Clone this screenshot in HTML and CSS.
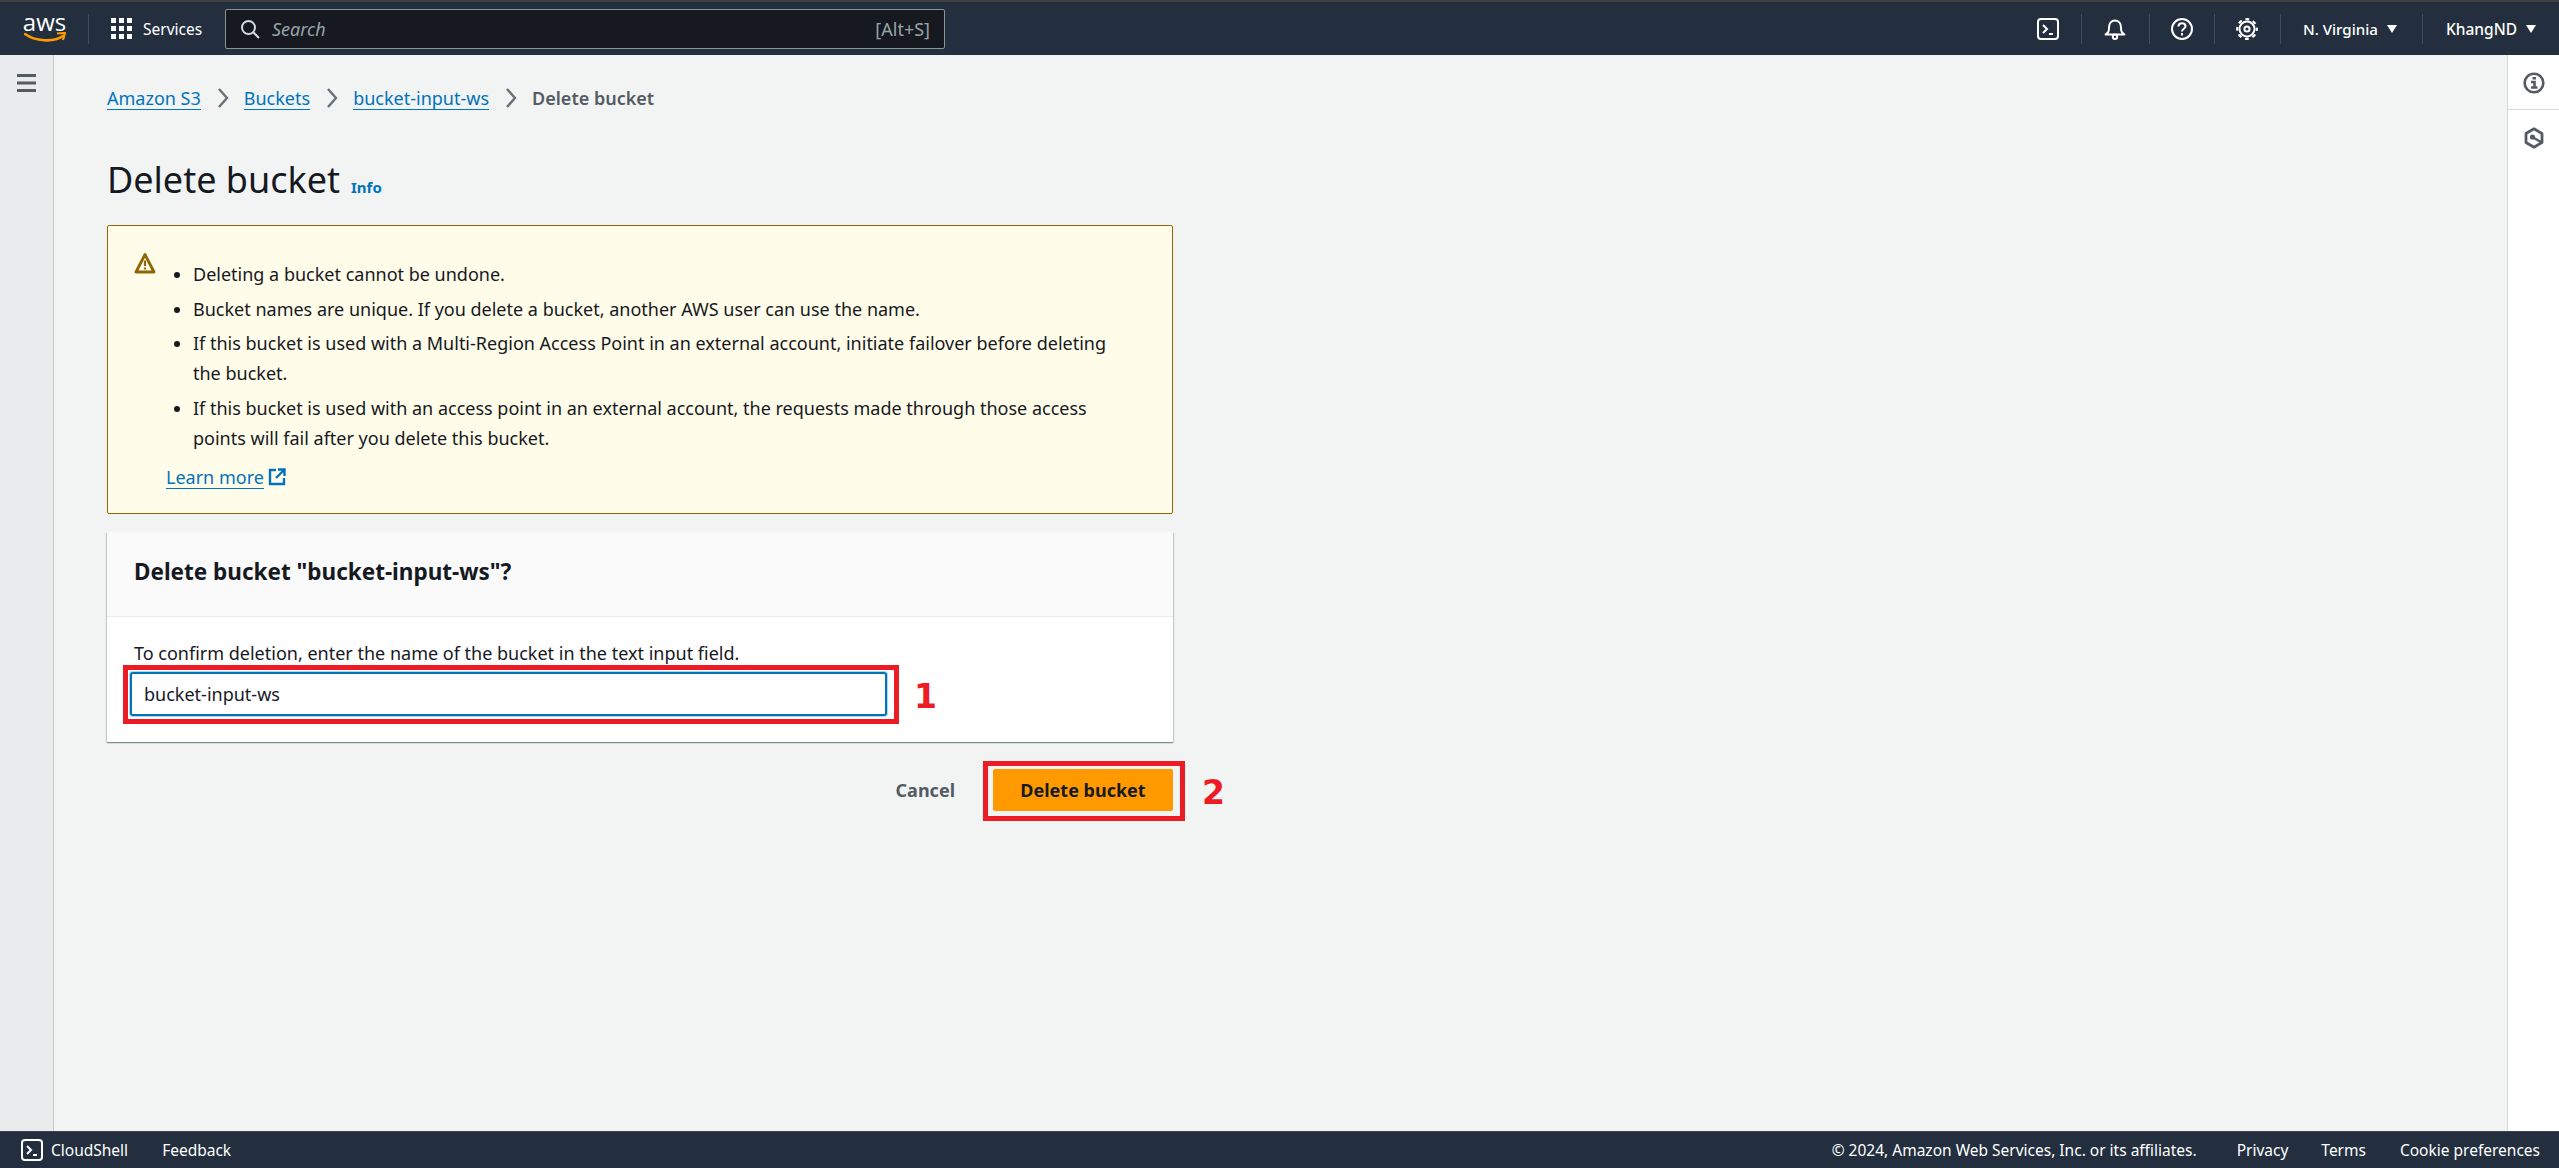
FILE: index.html
```html
<!DOCTYPE html>
<html lang="en">
<head>
<meta charset="utf-8">
<title>Delete bucket</title>
<link rel="stylesheet" href="styles.css">
</head>
<body>
<header class="topbar">
  <div class="logo">
    <span class="logo-text">aws</span>
    <svg class="smile" viewBox="0 0 42 12" width="42" height="12"><path d="M1 2c10 7 28 9 38 2" fill="none" stroke="#f90" stroke-width="2.6" stroke-linecap="round"/><path d="M33 1.500l8-.5-2 7" fill="none" stroke="#f90" stroke-width="2.200"/></svg>
  </div>
  <span class="sep sep-logo"></span>
  <svg class="grid-icon" viewBox="0 0 21 21" width="21" height="21" fill="#fff"><rect width="5" height="5"/><rect x="8" width="5" height="5"/><rect x="16" width="5" height="5"/><rect y="8" width="5" height="5"/><rect x="8" y="8" width="5" height="5"/><rect x="16" y="8" width="5" height="5"/><rect y="16" width="5" height="5"/><rect x="8" y="16" width="5" height="5"/><rect x="16" y="16" width="5" height="5"/></svg>
  <span class="services">Services</span>
  <div class="search">
    <svg viewBox="0 0 20 20" width="20" height="20" fill="none" stroke="#d5dbdb" stroke-width="2"><circle cx="8.500" cy="8.500" r="6.500"/><path d="M13 13l6 6"/></svg>
    <span class="search-ph">Search</span>
    <span class="search-key">[Alt+S]</span>
  </div>
  <div class="top-right">
    <span class="ti ti-shell"><svg viewBox="0 0 22 22" width="22" height="22" fill="none" stroke="#fff" stroke-width="2"><rect x="1" y="1" width="20" height="20" rx="3"/><path d="M6 7l4 4-4 4M12 16h4"/></svg></span>
    <span class="sep"></span>
    <span class="ti ti-bell"><svg viewBox="0 0 22 22" width="22" height="22" fill="none" stroke="#fff" stroke-width="2"><path d="M1.500 16.500c3-2 3.500-3 3.500-7 0-4 2.500-7 6-7s6 3 6 7c0 4 .5 5 3.500 7z" stroke-linejoin="round"/><circle cx="11" cy="18.800" r="2.200"/></svg></span>
    <span class="sep"></span>
    <span class="ti ti-help"><svg viewBox="0 0 22 22" width="22" height="22" fill="none" stroke="#fff" stroke-width="2"><circle cx="11" cy="11" r="10"/><path d="M7.500 8.500c0-2 1.500-3.200 3.500-3.200s3.500 1.200 3.500 3c0 2.500-3.500 2.500-3.500 5.200M11 15v2.500"/></svg></span>
    <span class="sep"></span>
    <span class="ti ti-gear"><svg viewBox="0 0 22 22" width="22" height="22" fill="none" stroke="#fff"><circle cx="11" cy="11" r="7.500" stroke-width="2"/><circle cx="11" cy="11" r="9.800" stroke-width="2.200" stroke-dasharray="3.800 3.900" stroke-dashoffset="1.900"/><circle cx="11" cy="11" r="2.600" stroke-width="2"/></svg></span>
    <span class="sep"></span>
    <span class="menu menu-region">N. Virginia<i class="caret"></i></span>
    <span class="sep"></span>
    <span class="menu menu-user">KhangND<i class="caret"></i></span>
  </div>
</header>
<div class="shell">
  <aside class="nav">
    <svg viewBox="0 0 19 18" width="19" height="18" fill="#545b64"><rect width="19" height="3"/><rect y="7.500" width="19" height="3"/><rect y="15" width="19" height="3"/></svg>
  </aside>
  <main class="content">
    <nav class="crumbs">
      <a class="link">Amazon S3</a>
      <svg class="chev" viewBox="0 0 12 20" width="12" height="20"><path d="M2 1l8 9-8 9" fill="none" stroke="#687078" stroke-width="2.400"/></svg>
      <a class="link">Buckets</a>
      <svg class="chev" viewBox="0 0 12 20" width="12" height="20"><path d="M2 1l8 9-8 9" fill="none" stroke="#687078" stroke-width="2.400"/></svg>
      <a class="link">bucket-input-ws</a>
      <svg class="chev" viewBox="0 0 12 20" width="12" height="20"><path d="M2 1l8 9-8 9" fill="none" stroke="#687078" stroke-width="2.400"/></svg>
      <span class="crumb-current">Delete bucket</span>
    </nav>
    <div class="title-row">
      <h1 class="title">Delete bucket</h1>
      <a class="info">Info</a>
    </div>
    <section class="alert">
      <svg class="warn" viewBox="0 0 22 22" width="22" height="22" fill="none" stroke="#8d6605" stroke-width="2.800"><path d="M11 2.500L2 20h18z" stroke-linejoin="round"/><path d="M11 8.500v5.500M11 15.500v2" stroke-width="2.200"/></svg>
      <div class="alert-body">
        <ul class="alert-list">
          <li>Deleting a bucket cannot be undone.</li>
          <li>Bucket names are unique. If you delete a bucket, another AWS user can use the name.</li>
          <li>If this bucket is used with a Multi-Region Access Point in an external account, initiate failover before deleting the bucket.</li>
          <li>If this bucket is used with an access point in an external account, the requests made through those access points will fail after you delete this bucket.</li>
        </ul>
        <div class="learn"><a class="link">Learn more</a>
          <svg viewBox="0 0 18 18" width="18" height="18" fill="none" stroke="#0073bb" stroke-width="2.400"><path d="M8 2H2v14h14v-6M10 1.500h6.500V8M16.500 1.500L8 10"/></svg>
        </div>
      </div>
    </section>
    <section class="card">
      <div class="card-head"><h2 class="card-title">Delete bucket "bucket-input-ws"?</h2></div>
      <div class="card-body">
        <label class="field-label">To confirm deletion, enter the name of the bucket in the text input field.</label>
        <div class="input-wrap">
          <div class="input">bucket-input-ws</div>
          <span class="mark mark-input"></span>
          <span class="num num-1">1</span>
        </div>
      </div>
    </section>
    <div class="actions">
      <span class="cancel">Cancel</span>
      <div class="btn-wrap">
        <span class="btn">Delete bucket</span>
        <span class="mark mark-btn"></span>
        <span class="num num-2">2</span>
      </div>
    </div>
  </main>
  <aside class="side">
    <div class="side-item side-first"><svg viewBox="0 0 22 22" width="22" height="22" fill="none" stroke="#545b64" stroke-width="2.600"><circle cx="11" cy="11" r="9.300"/><path d="M8 10h3.500v5M8 15.500h6.500M9.500 6.200h3.500"/></svg></div>
    <div class="side-item"><svg viewBox="0 0 22 22" width="22" height="22" fill="none" stroke="#545b64" stroke-width="2.800"><path d="M11 1.800l8 4.700v9l-8 4.700-8-4.700v-9z" stroke-linejoin="round"/><circle cx="9.500" cy="10" r="2.600" fill="#545b64" stroke="none"/><path d="M10 10.500l8 4.500" stroke-width="2.400"/></svg></div>
  </aside>
</div>
<footer class="footer">
  <svg viewBox="0 0 22 22" width="22" height="22" fill="none" stroke="#fff" stroke-width="2"><rect x="1" y="1" width="20" height="20" rx="3"/><path d="M6 7l4 4-4 4M12 16h4"/></svg>
  <span class="f-shell">CloudShell</span>
  <span class="f-feedback">Feedback</span>
  <div class="f-right">
    <span>© 2024, Amazon Web Services, Inc. or its affiliates.</span>
    <span class="f-privacy">Privacy</span>
    <span class="f-terms">Terms</span>
    <span class="f-cookie">Cookie preferences</span>
  </div>
</footer>
</body>
</html>
```

FILE: styles.css
```css
* { box-sizing: border-box; }
html, body { height: 100%; }
body {
  margin: 0;
  display: flex;
  flex-direction: column;
  height: 1168px;
  overflow: hidden;
  font-family: "Noto Sans", "Liberation Sans", sans-serif;
  font-size: 18px;
  color: #16191f;
  background: #f2f3f3;
}
.topbar {
  flex: none;
  height: 55px;
  display: flex;
  align-items: center;
  background: #232f3e;
  border-top: 2px solid #414141;
  padding-left: 24px;
  color: #fff;
  font-size: 15.500px;
}
.logo { width: 41px; display: flex; flex-direction: column; align-items: center; height: 34px; }
.logo-text { font-family: "Open Sans", sans-serif; font-size: 24px; line-height: 19px; }
.smile { width: 42px; height: 12px; margin-top: 1px; flex: none; }
.sep { width: 1px; height: 30px; background: #414d5c; flex: none; }
.sep-logo { margin-left: 23px; }
.grid-icon { margin-left: 22px; flex: none; }
.services { margin-left: 11px; width: 60px; white-space: nowrap; }
.search {
  margin-left: 22px;
  width: 720px;
  height: 40px;
  display: flex;
  align-items: center;
  padding: 0 14px;
  background: #16191f;
  border: 1px solid #879596;
  border-radius: 2px;
}
.search-ph { margin-left: 12px; font-size: 18px; font-style: italic; color: #95a5a6; }
.search-key { margin-left: auto; font-size: 18px; color: #95a5a6; }
.top-right { margin-left: auto; display: flex; align-items: center; padding-right: 23px; }
.ti { display: flex; width: 22px; height: 22px; }
.ti-shell { margin-right: 22px; }
.ti-bell { margin: 0 23px 0 22px; }
.ti-help { margin: 0 21px 0 21px; }
.ti-gear { margin: 0 22px 0 21px; }
.menu { display: flex; align-items: center; white-space: nowrap; font-weight: 500; }
.menu-region { margin: 0 25px 0 22px; font-size: 15.100px; }
.menu-user { margin-left: 23px; }
.caret { width: 0; height: 0; margin-left: 9px; border: 5.500px solid transparent; border-top: 8px solid #fff; border-bottom: 0; }

.shell { flex: 1; display: flex; min-height: 0; }
.nav {
  flex: none;
  width: 54px;
  background: #e9ebed;
  border-right: 1px solid #c6c9cc;
  padding: 19px 0 0 17px;
}
.nav svg { display: block; }
.content { flex: 1; padding: 30px 0 0 53px; width: 0; }
.side { flex: none; width: 52px; background: #fff; border-left: 1px solid #d5dbdb; }
.side-item { height: 55px; padding-top: 17px; padding-left: 15px; }
.side-first { border-bottom: 1px solid #d5dbdb; }
.side-item svg { display: block; }

.crumbs { display: flex; align-items: center; height: 26px; }
.link { color: #0073bb; border-bottom: 1px solid #0073bb; line-height: 22px; white-space: nowrap; }
.chev { margin: 0 15px 0 16px; flex: none; }
.crumb-current { color: #545b64; font-weight: 600; white-space: nowrap; }

.title-row { display: flex; align-items: baseline; margin-top: 47px; height: 44px; }
.title { margin: 0; font-size: 36px; font-weight: 400; line-height: 44px; }
.info { margin-left: 11px; color: #0073bb; font-size: 15px; font-weight: 700; }

.alert {
  width: 1066px;
  height: 289px;
  margin-top: 23px;
  display: flex;
  background: #fffce9;
  border: 1px solid #8d6605;
  border-radius: 2px;
  padding: 26px 26px 0 26px;
}
.warn { flex: none; }
.alert-body { margin-left: 10px; }
.alert-list { margin: 7px 0 0; padding: 0 0 0 27px; width: 960px; line-height: 30px; }
.alert-list li { margin-bottom: 4.500px; }
.learn { display: flex; align-items: center; margin-top: 13px; gap: 4px; }

.card {
  width: 1066px;
  height: 210px;
  margin-top: 18px;
  background: #fff;
  box-shadow: 0 1px 1px 0 rgba(0,28,36,.3), 1px 1px 1px 0 rgba(0,28,36,.15), -1px 1px 1px 0 rgba(0,28,36,.15);
}
.card-head { height: 85px; background: #fafafa; border-bottom: 1px solid #eaeded; padding: 25px 26px 0 27px; }
.card-title { margin: 0; font-size: 22.500px; font-weight: 700; line-height: 30px; }
.card-body { padding: 24px 24px 0 27px; }
.field-label { display: block; line-height: 24px; }
.input-wrap { position: relative; margin: 7px 0 0 -4px; width: 757px; }
.input {
  height: 44px;
  line-height: 40px;
  padding-left: 12px;
  border: 2px solid #0073bb;
  border-radius: 3px;
  background: #fff;
  box-shadow: 0 0 0 1px rgba(0,115,187,.3);
}
.mark { position: absolute; border: 5px solid #ed1c24; }
.mark-input { left: -7px; right: -12px; top: -7px; bottom: -8px; }
.mark-btn { left: -10px; right: -12px; top: -8px; bottom: -10px; }
.num { position: absolute; font-family: "DejaVu Sans", sans-serif; color: #ed1c24; font-size: 33px; font-weight: 700; line-height: 36px; }
.num-1 { left: 784px; top: 7px; }
.num-2 { left: 209px; top: 6px; }

.actions { width: 1066px; margin-top: 27px; display: flex; justify-content: flex-end; align-items: center; }
.cancel { color: #545b64; font-weight: 700; margin-right: 38px; }
.btn-wrap { position: relative; }
.btn {
  display: block;
  width: 180px;
  height: 42px;
  line-height: 42px;
  text-align: center;
  background: #f90;
  border-radius: 2px;
  font-weight: 700;
}

.footer {
  flex: none;
  height: 37px;
  display: flex;
  align-items: center;
  padding: 0 19px 0 21px;
  background: #232f3e;
  border-top: 1px solid #3b4552;
  color: #fff;
  font-size: 15.500px;
}
.f-shell { margin-left: 8px; }
.f-feedback { margin-left: 34px; }
.f-right { margin-left: auto; display: flex; }
.f-privacy { margin-left: 40px; }
.f-terms { margin-left: 33px; }
.f-cookie { margin-left: 34px; }
```
